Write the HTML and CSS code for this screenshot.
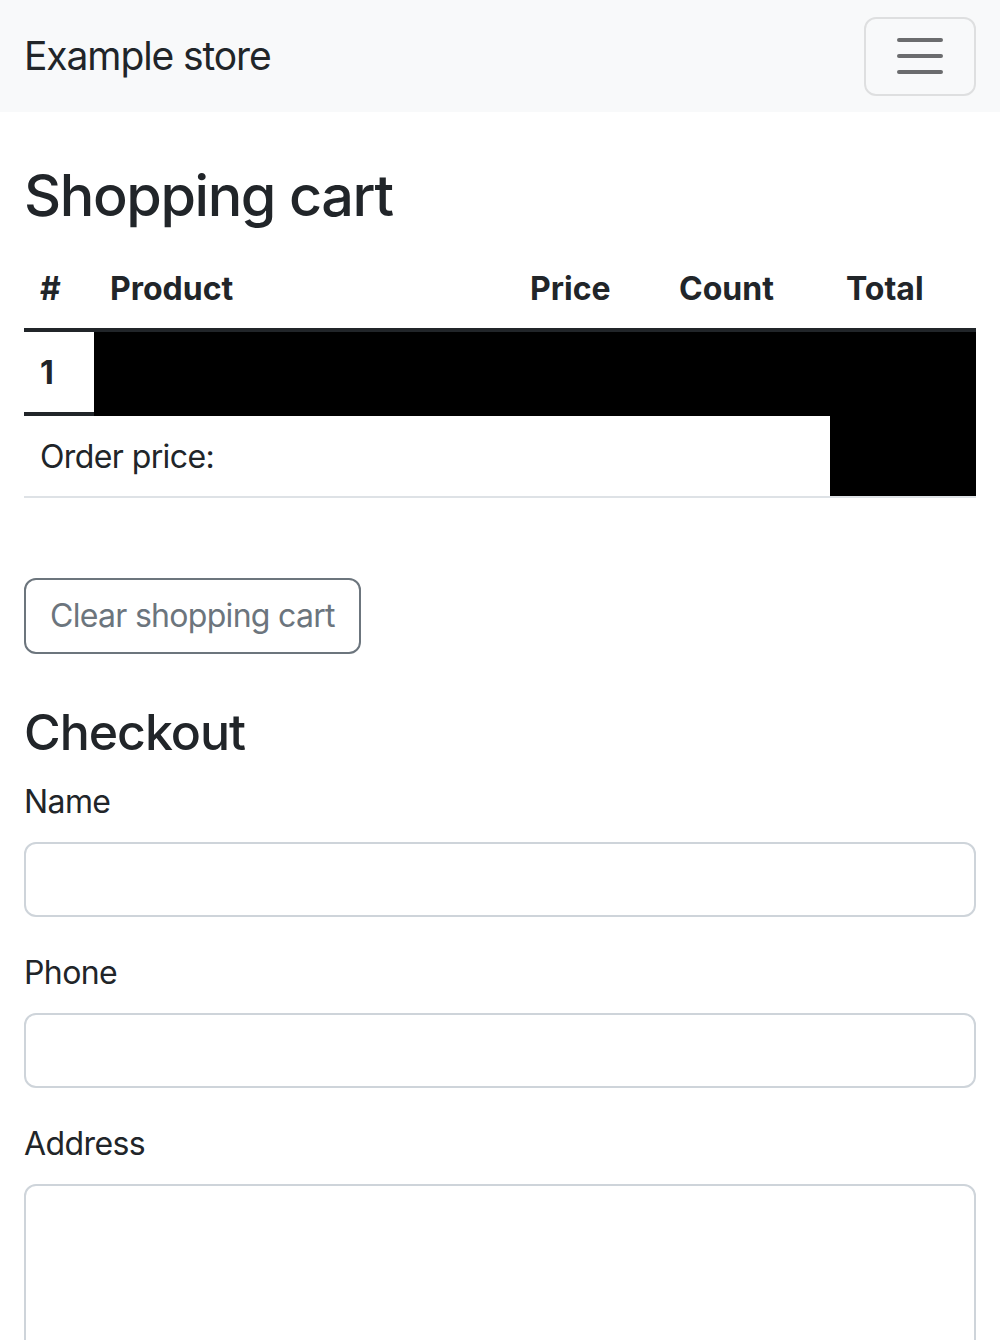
FILE: index.html
```html
<!DOCTYPE html>
<html lang="en">
<head>
<meta charset="utf-8">
<title>Example store</title>
<link rel="stylesheet" href="styles.css">
</head>
<body>
<nav class="navbar">
  <a class="brand" href="#">Example store</a>
  <button class="toggler" type="button" aria-label="Toggle navigation">
    <svg width="48" height="36" viewBox="0 0 48 36" aria-hidden="true">
      <path d="M3 2H45M3 18H45M3 34H45" stroke="#6b6c6e" stroke-width="4" stroke-linecap="round" fill="none"/>
    </svg>
  </button>
</nav>
<main class="container">
  <h1 class="title">Shopping cart</h1>
  <table class="cart">
    <thead>
      <tr>
        <th class="c-num">#</th>
        <th class="c-prod">Product</th>
        <th class="c-price">Price</th>
        <th class="c-count">Count</th>
        <th class="c-total">Total</th>
      </tr>
    </thead>
    <tbody>
      <tr>
        <th class="row-num">1</th>
        <td class="redact" colspan="4"></td>
      </tr>
    </tbody>
    <tfoot>
      <tr>
        <td class="foot-label" colspan="4">Order price:</td>
        <td class="redact foot-total"></td>
      </tr>
    </tfoot>
  </table>
  <div class="actions">
    <button class="btn-outline" type="button">Clear shopping cart</button>
  </div>
  <h2 class="subtitle">Checkout</h2>
  <form class="checkout">
    <div class="field">
      <label class="label" for="name">Name</label>
      <input class="input" id="name" type="text">
    </div>
    <div class="field">
      <label class="label" for="phone">Phone</label>
      <input class="input" id="phone" type="text">
    </div>
    <div class="field">
      <label class="label" for="address">Address</label>
      <textarea class="input textarea" id="address" rows="4"></textarea>
    </div>
  </form>
</main>
</body>
</html>
```

FILE: styles.css
```css
* { box-sizing: border-box; }
html, body { margin: 0; padding: 0; }
body {
  font-family: Inter, "Liberation Sans", Arial, sans-serif;
  font-size: 32px;
  line-height: 1.5;
  letter-spacing: -0.6px;
  color: #212529;
  background: #fff;
}
.navbar {
  display: flex;
  align-items: center;
  justify-content: space-between;
  height: 112px;
  padding: 0 24px;
  background: #f8f9fa;
}
.brand {
  font-size: 39px;
  letter-spacing: -1.1px;
  color: #212529;
  text-decoration: none;
  line-height: 1.5;
}
.toggler {
  width: 112px;
  height: 79px;
  display: flex;
  align-items: center;
  justify-content: center;
  background: transparent;
  border: 2px solid rgba(0,0,0,0.1);
  border-radius: 12px;
  padding: 0;
}
.toggler svg { display: block; }
.container { padding: 0 24px; }
.title {
  font-size: 57.5px;
  font-weight: 500;
  letter-spacing: -1.4px;
  line-height: 71px;
  margin: 48px 0 16px;
}
.cart {
  width: 100%;
  border-collapse: collapse;
  table-layout: fixed;
  margin-bottom: 80px;
}
.cart th, .cart td {
  padding: 18px 16px 15px;
  text-align: left;
  vertical-align: top;
  line-height: 48px;
}
.cart th { letter-spacing: 0; }
.cart thead th {
  font-weight: 700;
  border-bottom: 4px solid #212529;
}
.cart tbody th, .cart tbody td, .cart tfoot td {
  padding-top: 17px;
}
.c-num { width: 70px; }
.c-prod { width: 420px; }
.c-price { width: 149px; }
.c-count { width: 167px; }
.c-total { width: 146px; }
.row-num {
  font-weight: 700;
  border-bottom: 4px solid #212529;
}
.redact { background: #000; }
.cart tbody .redact { border-bottom: 4px solid #000; }
.foot-label, .foot-total { border-bottom: 2px solid #dee2e6; }
.actions { margin-bottom: 48px; }
.btn-outline {
  font-family: inherit;
  font-size: 32px;
  letter-spacing: -0.7px;
  line-height: 48px;
  padding: 12px 24px;
  color: #6c757d;
  background: transparent;
  border: 2px solid #6c757d;
  border-radius: 12px;
}
.subtitle {
  font-size: 50px;
  font-weight: 500;
  letter-spacing: -1px;
  line-height: 60px;
  margin: 0 0 16px;
}
.checkout { margin: 0; }
.field { margin-bottom: 32px; }
.label {
  display: block;
  margin-bottom: 16px;
  line-height: 48px;
}
.input {
  display: block;
  width: 100%;
  height: 75px;
  font-family: inherit;
  font-size: 32px;
  padding: 12px 24px;
  border: 2px solid #ced4da;
  border-radius: 12px;
  background: #fff;
  color: #212529;
}
.textarea { height: 240px; resize: vertical; }
```
